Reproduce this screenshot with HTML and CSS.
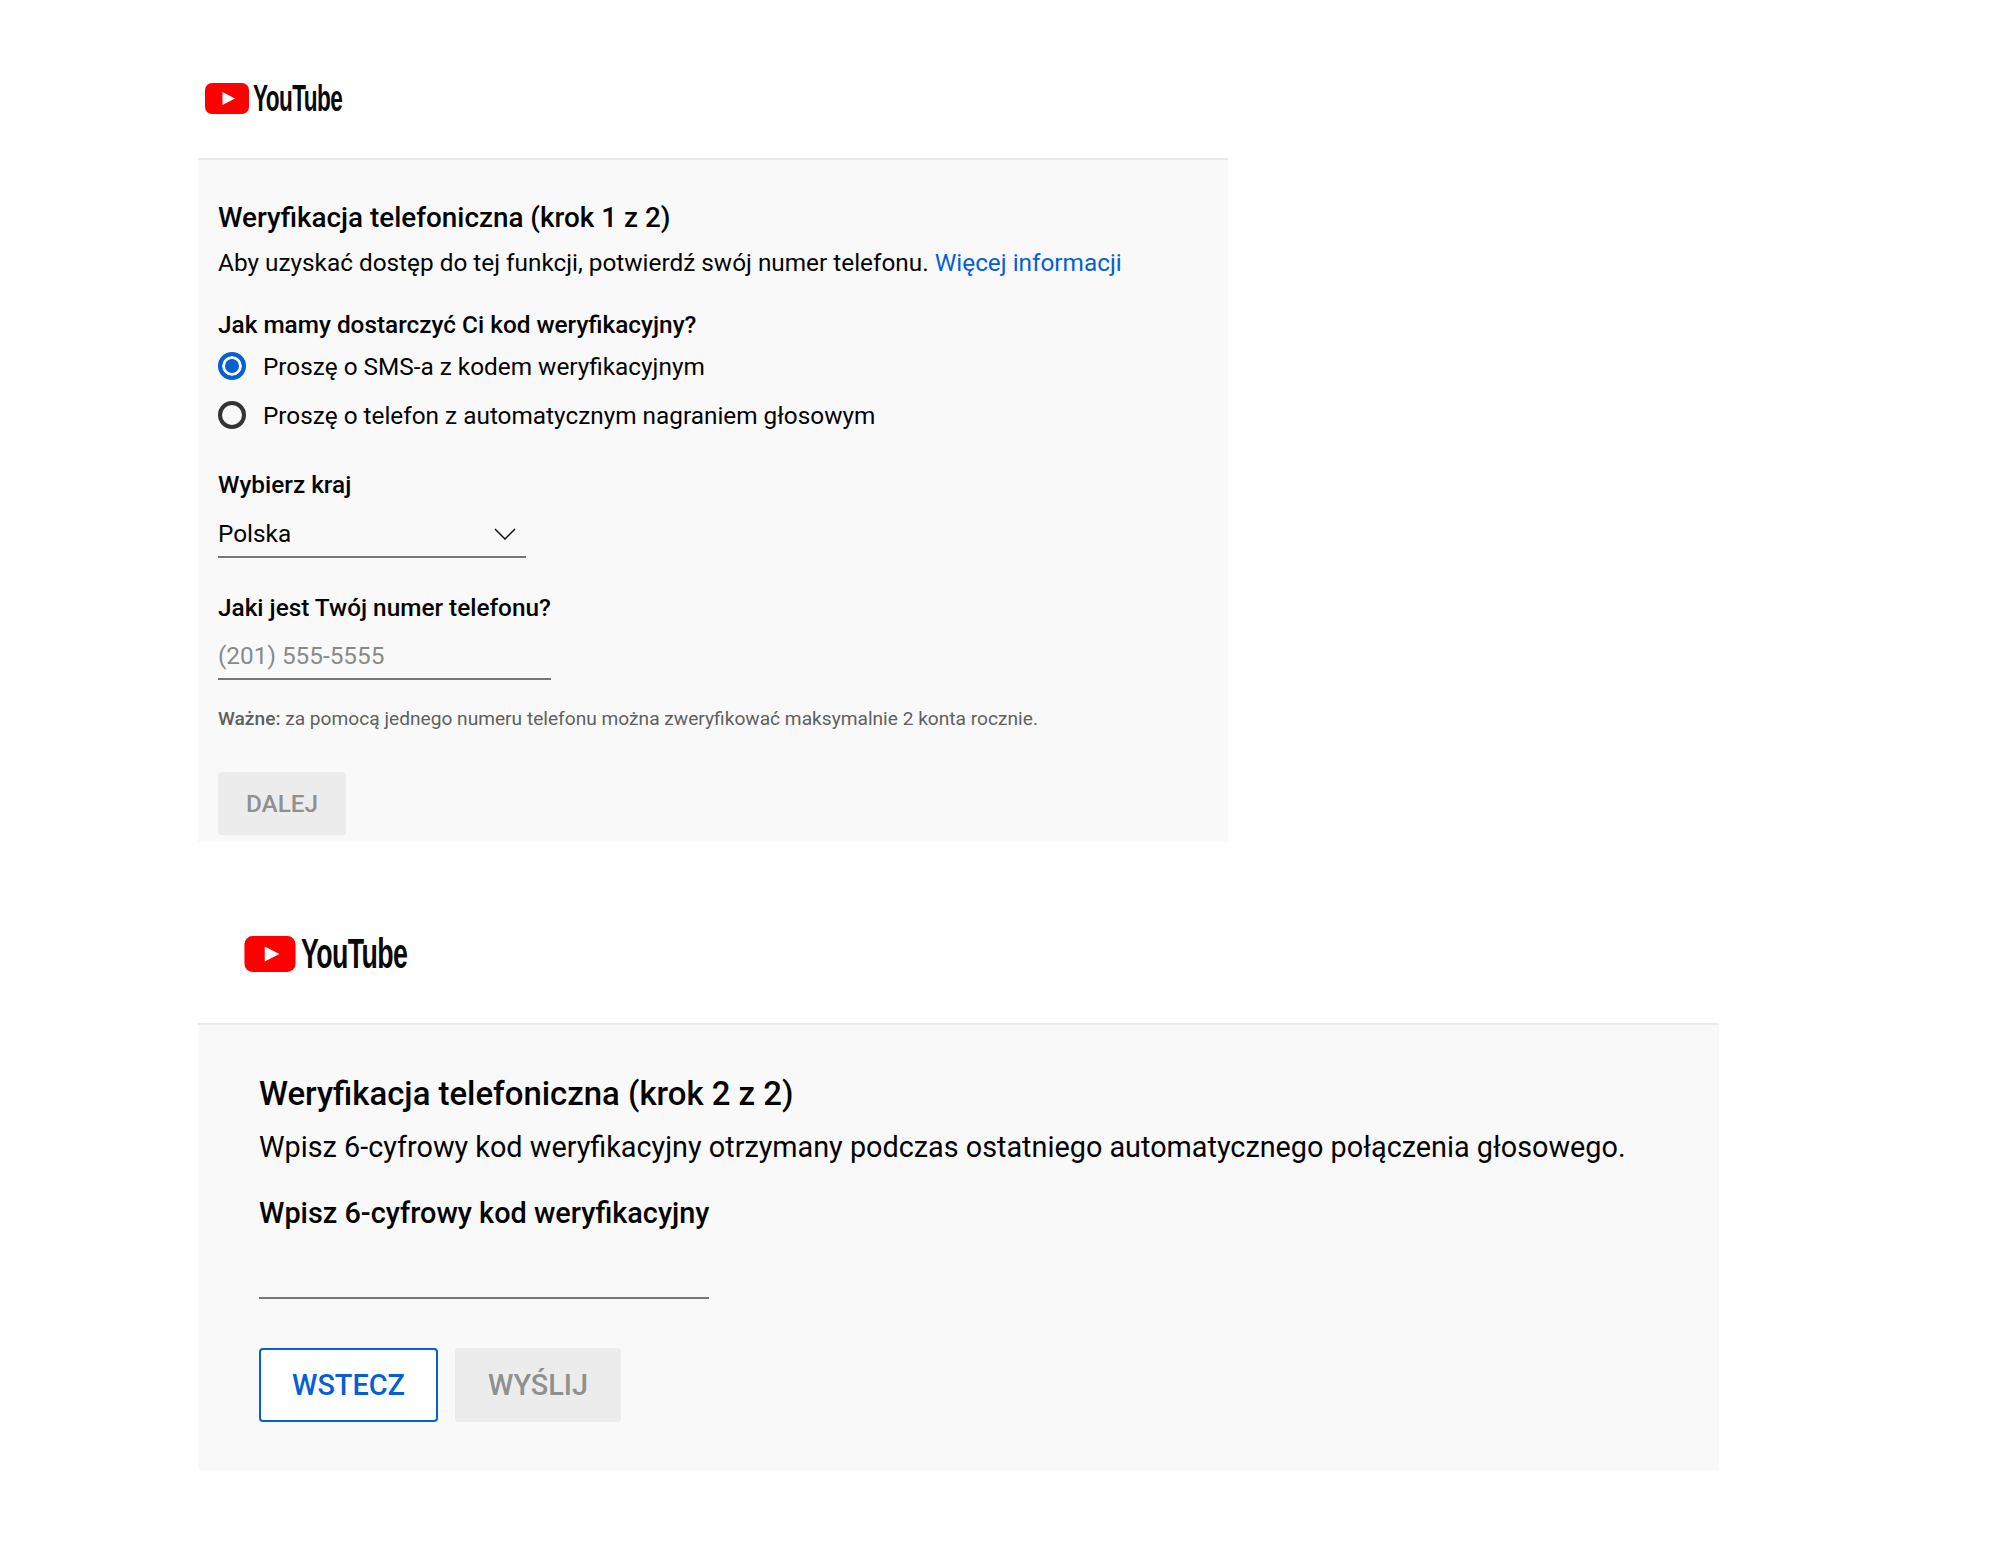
FILE: index.html
```html
<!DOCTYPE html>
<html lang="pl">
<head>
    <meta charset="UTF-8">
    <title>Weryfikacja telefoniczna</title>
    <link rel="stylesheet" href="styles.css">
</head>
<body>
    <div class="container">

        <section class="step step-one">
            <header class="logo">
                <svg class="logo-icon" viewBox="0 0 44 31">
                    <rect width="44" height="31" rx="7" fill="#ff0000"/>
                    <path d="M17.5 9 L30 15.5 L17.5 22 Z" fill="#fff"/>
                </svg>
                <span class="logo-text">YouTube</span>
            </header>

            <div class="panel">
                <h2>Weryfikacja telefoniczna (krok 1 z 2)</h2>
                <p class="desc">Aby uzyskać dostęp do tej funkcji, potwierdź swój numer telefonu. <a href="#">Więcej informacji</a></p>

                <div class="label first">Jak mamy dostarczyć Ci kod weryfikacyjny?</div>
                <div class="radio checked"><i></i>Proszę o SMS-a z kodem weryfikacyjnym</div>
                <div class="radio"><i></i>Proszę o telefon z automatycznym nagraniem głosowym</div>

                <div class="label country">Wybierz kraj</div>
                <div class="select">
                    Polska
                    <svg viewBox="0 0 22 12" class="arrow">
                        <path d="M1 1 L11 11 L21 1" fill="none" stroke="#111" stroke-width="1.5"/>
                    </svg>
                </div>

                <div class="label phone">Jaki jest Twój numer telefonu?</div>
                <div class="input">(201) 555-5555</div>

                <p class="note"><b>Ważne:</b> za pomocą jednego numeru telefonu można zweryfikować maksymalnie 2 konta rocznie.</p>

                <button class="btn off">DALEJ</button>
            </div>
        </section>

        <section class="step step-two">
            <header class="logo">
                <svg class="logo-icon" viewBox="0 0 44 31">
                    <rect width="44" height="31" rx="7" fill="#ff0000"/>
                    <path d="M17.5 9 L30 15.5 L17.5 22 Z" fill="#fff"/>
                </svg>
                <span class="logo-text">YouTube</span>
            </header>

            <div class="panel">
                <h2>Weryfikacja telefoniczna (krok 2 z 2)</h2>
                <p class="desc">Wpisz 6-cyfrowy kod weryfikacyjny otrzymany podczas ostatniego automatycznego połączenia głosowego.</p>

                <div class="label">Wpisz 6-cyfrowy kod weryfikacyjny</div>
                <div class="input"></div>

                <div class="buttons">
                    <button class="btn back">WSTECZ</button>
                    <button class="btn off">WYŚLIJ</button>
                </div>
            </div>
        </section>

    </div>
</body>
</html>
```

FILE: styles.css
```css
*{
    margin: 0px;
    padding: 0px;
    box-sizing: border-box;
}

body{
    background-color: white;
    font-family: Roboto, "Liberation Sans", sans-serif;
    color: #030303;
}

.container{
    padding-left: 198px;
}

/* logo */
.logo{
    display: flex;
    align-items: center;
}

.logo-text{
    font-family: "Liberation Sans", sans-serif;
    font-weight: bold;
    letter-spacing: -1px;
    color: #0a0a0a;
    transform-origin: left center;
    display: inline-block;
}

.panel{
    background-color: #f9f9f9;
    border-top: 2px solid #e9e9e9;
}

.panel h2{
    font-weight: 500;
}

.label{
    font-weight: 500;
}

/* step 1 */
.step-one{
    width: 1030px;
    height: 842px;
}

.step-one .logo{
    height: 158px;
    padding: 38px 0px 0px 7px;
}

.step-one .logo-icon{
    width: 44px;
    height: 31px;
}

.step-one .logo-text{
    font-size: 36.5px;
    margin: 2px 0px 0px 4px;
    transform: scaleX(0.62);
}

.step-one .panel{
    height: 684px;
    padding: 39px 20px 0px 20px;
}

.step-one h2{
    font-size: 27.85px;
    line-height: 38px;
}

.step-one .desc{
    font-size: 24.35px;
    line-height: 34px;
    margin-top: 9px;
}

.desc a{
    color: #065fd4;
    text-decoration: none;
}

.step-one .label{
    font-size: 24.35px;
    line-height: 30px;
}

.label.first{
    margin-top: 30px;
}

.radio{
    display: flex;
    align-items: center;
    font-size: 24.35px;
    height: 28px;
    margin-top: 12px;
}

.radio + .radio{
    margin-top: 21px;
}

.radio i{
    width: 28px;
    height: 28px;
    border: 4px solid #333;
    border-radius: 50%;
    margin-right: 17px;
    flex-shrink: 0;
}

.radio.checked i{
    border-color: #065fd4;
    background-color: #065fd4;
    box-shadow: inset 0px 0px 0px 3px white;
}

.label.country{
    margin-top: 41px;
}

.select{
    width: 308px;
    height: 44px;
    margin-top: 14px;
    font-size: 24.35px;
    line-height: 38px;
    border-bottom: 2px solid #777;
    display: flex;
    justify-content: space-between;
    align-items: center;
    padding: 0px 10px 2px 0px;
}

.arrow{
    width: 22px;
    height: 12px;
}

.label.phone{
    margin-top: 35px;
}

.input{
    border-bottom: 2px solid #777;
    color: #8a8a8a;
}

.step-one .input{
    width: 333px;
    height: 43px;
    margin-top: 14px;
    font-size: 24.35px;
    line-height: 38px;
}

.note{
    font-size: 19.15px;
    line-height: 24px;
    color: #606060;
    margin-top: 27px;
}

.note b{
    font-weight: 500;
}

.btn{
    font-family: Roboto, "Liberation Sans", sans-serif;
    font-weight: 500;
    border: none;
    border-radius: 4px;
}

.btn.off{
    background-color: #ececec;
    color: #909090;
}

.step-one .btn{
    width: 128px;
    height: 63px;
    font-size: 24.35px;
    margin-top: 41px;
}

/* step 2 */
.step-two{
    width: 1521px;
    height: 628px;
}

.step-two .logo{
    height: 181px;
    padding: 42px 0px 0px 46px;
}

.step-two .logo-icon{
    width: 52px;
    height: 36px;
}

.step-two .logo-text{
    font-size: 42.5px;
    margin-left: 5px;
    transform: scaleX(0.63);
}

.step-two .panel{
    height: 447px;
    padding: 47px 61px 0px 61px;
}

.step-two h2{
    font-size: 32.9px;
    line-height: 44px;
}

.step-two .desc{
    font-size: 28.8px;
    line-height: 42px;
    margin-top: 10px;
}

.step-two .label{
    font-size: 28.85px;
    line-height: 42px;
    margin-top: 24px;
}

.step-two .input{
    width: 450px;
    height: 65px;
    margin-top: 0px;
}

.buttons{
    display: flex;
    gap: 17px;
    margin-top: 49px;
}

.step-two .btn{
    height: 74px;
    font-size: 28.85px;
}

.btn.back{
    width: 179px;
    background-color: white;
    color: #065fd4;
    border: 2px solid #065fd4;
}

.buttons .off{
    width: 166px;
}
```
